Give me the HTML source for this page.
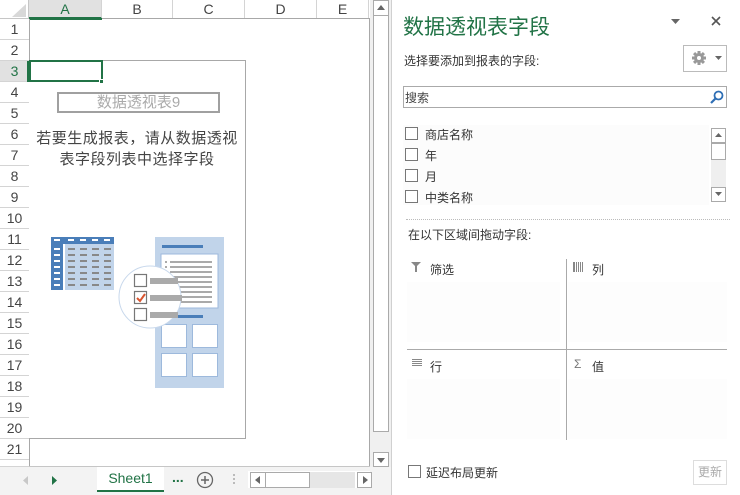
<!DOCTYPE html>
<html><head><meta charset="utf-8">
<style>
*{margin:0;padding:0;box-sizing:border-box}
body{width:740px;height:495px;overflow:hidden;background:#fff;font-family:"Liberation Sans","Noto Sans CJK SC",sans-serif;position:relative}
.a{position:absolute}
.rh{position:absolute;left:0;width:29px;height:21px;border-bottom:1px solid #d4d4d4;font-size:14px;color:#444;text-align:center;line-height:21px;background:#fff}
.ch{position:absolute;top:0;height:19px;border-right:1px solid #d4d4d4;font-size:14px;color:#444;text-align:center;line-height:19px;background:#fff}
.cb{position:absolute;width:13px;height:13px;border:1px solid #777;background:#fff}
.t{position:absolute;font-size:12px;color:#333;white-space:nowrap}
</style></head><body>
<div class="a" style="left:0;top:0;width:29px;height:19px;background:#fff;border-right:1px solid #c6c6c6;border-bottom:1px solid #c6c6c6"></div>
<svg class="a" style="left:12px;top:4px" width="14" height="13"><polygon points="14,0 14,13 0,13" fill="#d8d8d8"/></svg>
<div class="ch" style="left:29px;width:73px;background:#e1e1e1;color:#217346;border-bottom:2px solid #217346">A</div>
<div class="ch" style="left:102px;width:71px">B</div>
<div class="ch" style="left:173px;width:72px">C</div>
<div class="ch" style="left:245px;width:72px">D</div>
<div class="ch" style="left:317px;width:52px">E</div>
<div class="a" style="left:29px;top:18px;width:341px;height:1px;background:#a8a8a8"></div>
<div class="a" style="left:29px;top:18px;width:73px;height:2px;background:#217346"></div>
<div id="rows"></div>
<div class="a" style="left:29px;top:19px;width:1px;height:448px;background:#a8a8a8"></div>
<div class="a" style="left:369px;top:19px;width:1px;height:448px;background:#a8a8a8"></div>
<div class="a" style="left:29px;top:466px;width:341px;height:1px;background:#c6c6c6"></div>
<div class="a" style="left:29px;top:60px;width:217px;height:379px;border:1px solid #a8a8a8;border-left:none;background:#fff"></div>
<div class="a" style="left:29px;top:60px;width:74px;height:22px;border:2px solid #217346"></div>
<div class="a" style="left:99px;top:79px;width:5px;height:5px;background:#217346;border:1px solid #fff"></div>
<div class="a" style="left:57px;top:92px;width:163px;height:21px;border:2px solid #a0a0a0;font-size:15px;color:#aaa;text-align:center;line-height:17px">数据透视表9</div>
<div class="t" style="left:29px;top:128px;width:216px;text-align:center;font-size:15px;color:#444;line-height:21px;letter-spacing:0.5px">若要生成报表，请从数据透视<br>表字段列表中选择字段</div>
<svg class="a" style="left:40px;top:220px" width="200" height="180">
<rect x="11" y="17" width="63" height="53" fill="#c1d4ea"/>
<rect x="11" y="17" width="12" height="53" fill="#4a7eb9"/>
<rect x="11" y="17" width="63" height="7" fill="#4a7eb9"/>
<rect x="23" y="24" width="2" height="46" fill="#fff"/>
<g fill="#fff"><rect x="14" y="19" width="6" height="2"/><rect x="28" y="19" width="6" height="2"/><rect x="40" y="19" width="6" height="2"/><rect x="52" y="19" width="6" height="2"/><rect x="64" y="19" width="6" height="2"/></g>
<g id="tbl"></g>
<rect x="115" y="17" width="69" height="151" fill="#c1d4ea"/>
<rect x="122" y="25" width="41" height="3" fill="#4a7eb9"/>
<rect x="121" y="34" width="57" height="54" fill="#fff" stroke="#9db9dc"/>
<g fill="#aaa"><rect x="125" y="41" width="2" height="2"/><rect x="125" y="46" width="2" height="2"/><rect x="130" y="41" width="42" height="2"/><rect x="130" y="46" width="42" height="2"/><rect x="130" y="51" width="42" height="2"/><rect x="130" y="56" width="42" height="2"/><rect x="130" y="61" width="42" height="2"/><rect x="130" y="66" width="42" height="2"/><rect x="130" y="71" width="42" height="2"/><rect x="130" y="76" width="42" height="2"/><rect x="130" y="81" width="42" height="2"/></g>
<rect x="122" y="95" width="41" height="3" fill="#4a7eb9"/>
<g fill="#fff" stroke="#9db9dc"><rect x="121.5" y="104.5" width="25" height="23"/><rect x="152.5" y="104.5" width="25" height="23"/><rect x="121.5" y="133.5" width="25" height="23"/><rect x="152.5" y="133.5" width="25" height="23"/></g>
<circle cx="110" cy="77" r="31" fill="#fff" stroke="#c8d8ec"/>
<g fill="#fff" stroke="#777" stroke-width="1.2"><rect x="94.5" y="54.5" width="12" height="12"/><rect x="94.5" y="71.5" width="12" height="12"/><rect x="94.5" y="88.5" width="12" height="12"/></g>
<g fill="#aaa"><rect x="110" y="58" width="28" height="6"/><rect x="110" y="75" width="32" height="6"/><rect x="110" y="92" width="28" height="6"/></g>
<path d="M97 78 L100 81 L105 74" stroke="#d9552f" stroke-width="2" fill="none"/>
</svg>
<div class="a" style="left:370px;top:0;width:21px;height:467px;background:#f0f0f0"></div>
<div class="a" style="left:373px;top:0;width:16px;height:16px;border:1px solid #aaa;background:#fff"></div>
<svg class="a" style="left:377px;top:5px" width="8" height="5"><polygon points="0,5 8,5 4,0" fill="#666"/></svg>
<div class="a" style="left:373px;top:15px;width:16px;height:417px;border:1px solid #aaa;background:#fff"></div>
<div class="a" style="left:373px;top:452px;width:16px;height:15px;border:1px solid #aaa;background:#fff"></div>
<svg class="a" style="left:377px;top:458px" width="8" height="5"><polygon points="0,0 8,0 4,5" fill="#666"/></svg>
<div class="a" style="left:0;top:467px;width:392px;height:28px;background:#f3f3f3"></div>
<svg class="a" style="left:23px;top:476px" width="6" height="9"><polygon points="5,0 5,9 0,4.5" fill="#c8c8c8"/></svg>
<svg class="a" style="left:52px;top:476px" width="6" height="9"><polygon points="0,0 0,9 5,4.5" fill="#217346"/></svg>
<div class="a" style="left:97px;top:467px;width:67px;height:25px;background:#fff;border-bottom:2px solid #217346;font-size:14px;color:#217346;text-align:center;line-height:23px">Sheet1</div>
<div class="t" style="left:172px;top:469px;font-size:14px;color:#217346;font-weight:bold">...</div>
<svg class="a" style="left:196px;top:471px" width="18" height="18"><circle cx="9" cy="9" r="7.5" fill="none" stroke="#666" stroke-width="1.3"/><path d="M9 5V13M5 9H13" stroke="#666" stroke-width="1.5"/></svg>
<div class="a" style="left:233px;top:474px;width:2px;height:2px;background:#bbb;box-shadow:0 4px #bbb,0 8px #bbb"></div>
<div class="a" style="left:248px;top:471px;width:122px;height:17px;background:#fff"></div>
<div class="a" style="left:250px;top:472px;width:105px;height:16px;background:#e6e6e6"></div>
<div class="a" style="left:250px;top:472px;width:16px;height:16px;border:1px solid #aaa;background:#fff"></div>
<svg class="a" style="left:255px;top:476px" width="5" height="8"><polygon points="5,0 5,8 0,4" fill="#666"/></svg>
<div class="a" style="left:265px;top:472px;width:45px;height:16px;border:1px solid #aaa;background:#fff"></div>
<div class="a" style="left:357px;top:472px;width:15px;height:16px;border:1px solid #aaa;background:#fff"></div>
<svg class="a" style="left:363px;top:476px" width="5" height="8"><polygon points="0,0 0,8 5,4" fill="#666"/></svg>
<div class="a" style="left:391px;top:0;width:349px;height:495px;background:#fff;border-left:1px solid #d0d0d0"></div>
<div class="t" style="left:403px;top:11px;font-size:21px;color:#217346">数据透视表字段</div>
<svg class="a" style="left:671px;top:19px" width="9" height="5"><polygon points="0,0 9,0 4.5,5" fill="#666"/></svg>
<svg class="a" style="left:711px;top:16px" width="10" height="10"><path d="M1 1L9 9M9 1L1 9" stroke="#555" stroke-width="1.6"/></svg>
<div class="t" style="left:404px;top:52px;font-size:12px">选择要添加到报表的字段:</div>
<div class="a" style="left:683px;top:45px;width:44px;height:27px;border:1px solid #bbb;background:#fff"></div>
<svg class="a" style="left:692px;top:51px" width="14" height="14"><g fill="#999"><circle cx="7" cy="7" r="5"/><rect x="5.5" y="0" width="3" height="14"/><rect x="0" y="5.5" width="14" height="3"/><rect x="5.5" y="0" width="3" height="14" transform="rotate(45 7 7)"/><rect x="5.5" y="0" width="3" height="14" transform="rotate(-45 7 7)"/></g><circle cx="7" cy="7" r="2" fill="#fff"/></svg>
<svg class="a" style="left:715px;top:56px" width="7" height="4"><polygon points="0,0 7,0 3.5,4" fill="#666"/></svg>
<div class="a" style="left:403px;top:86px;width:324px;height:22px;border:1px solid #aaa;background:#fff"></div>
<div class="t" style="left:405px;top:89px;font-size:12px;color:#444">搜索</div>
<svg class="a" style="left:710px;top:90px" width="14" height="14"><circle cx="8.5" cy="5.5" r="4" fill="none" stroke="#2f6fb5" stroke-width="1.8"/><path d="M5.5 8.5L1 13" stroke="#2f6fb5" stroke-width="2.2"/></svg>
<div class="a" style="left:403px;top:125px;width:306px;height:80px;background:#fcfcfc"></div>
<div class="cb" style="left:405px;top:127px"></div><div class="t" style="left:425px;top:126px">商店名称</div>
<div class="cb" style="left:405px;top:148px"></div><div class="t" style="left:425px;top:147px">年</div>
<div class="cb" style="left:405px;top:169px"></div><div class="t" style="left:425px;top:168px">月</div>
<div class="cb" style="left:405px;top:190px"></div><div class="t" style="left:425px;top:189px">中类名称</div>
<div class="a" style="left:711px;top:128px;width:15px;height:74px;background:#efefef"></div>
<div class="a" style="left:711px;top:128px;width:15px;height:15px;border:1px solid #aaa;background:#fff"></div>
<svg class="a" style="left:715px;top:133px" width="7" height="4"><polygon points="0,4 7,4 3.5,0" fill="#666"/></svg>
<div class="a" style="left:711px;top:143px;width:15px;height:17px;border:1px solid #aaa;background:#fff"></div>
<div class="a" style="left:711px;top:187px;width:15px;height:15px;border:1px solid #aaa;background:#fff"></div>
<svg class="a" style="left:715px;top:192px" width="7" height="4"><polygon points="0,0 7,0 3.5,4" fill="#666"/></svg>
<div class="a" style="left:406px;top:219px;width:324px;border-top:1px dotted #bbb"></div>
<div class="t" style="left:408px;top:226px">在以下区域间拖动字段:</div>
<div class="a" style="left:407px;top:282px;width:153px;height:60px;background:#fdfdfd"></div>
<div class="a" style="left:568px;top:282px;width:159px;height:60px;background:#fdfdfd"></div>
<div class="a" style="left:407px;top:379px;width:153px;height:60px;background:#fdfdfd"></div>
<div class="a" style="left:568px;top:379px;width:159px;height:60px;background:#fdfdfd"></div>
<div class="a" style="left:566px;top:259px;width:1px;height:181px;background:#aaa"></div>
<div class="a" style="left:407px;top:349px;width:320px;height:1px;background:#aaa"></div>
<svg class="a" style="left:411px;top:262px" width="10" height="10"><polygon points="0,0 10,0 6,4 6,10 4,10 4,4" fill="#888"/></svg>
<div class="t" style="left:430px;top:261px">筛选</div>
<svg class="a" style="left:573px;top:262px" width="10" height="10"><g fill="#888"><rect x="0" y="0" width="2" height="10"/><rect x="3" y="0" width="1" height="10"/><rect x="5" y="0" width="1" height="10"/><rect x="7" y="0" width="1" height="10"/><rect x="9" y="0" width="1" height="10"/></g></svg>
<div class="t" style="left:592px;top:261px">列</div>
<svg class="a" style="left:412px;top:359px" width="10" height="8"><g fill="#888"><rect y="0" width="10" height="1"/><rect y="2" width="10" height="1"/><rect y="4" width="10" height="1"/><rect y="6" width="10" height="1"/></g></svg>
<div class="t" style="left:430px;top:358px">行</div>
<div class="t" style="left:574px;top:357px;font-size:12px;color:#777">Σ</div>
<div class="t" style="left:592px;top:358px">值</div>
<div class="cb" style="left:408px;top:465px"></div><div class="t" style="left:426px;top:464px">延迟布局更新</div>
<div class="a" style="left:693px;top:460px;width:34px;height:25px;border:1px solid #ddd;font-size:12px;color:#aaa;text-align:center;line-height:23px">更新</div>
<script>
var r=document.getElementById('rows'),h='';
for(var i=1;i<=22;i++){var t=19+(i-1)*21;h+='<div class="rh" style="top:'+t+'px;'+(i==3?'background:#e1e1e1;color:#217346;':'')+(i==22?'height:'+(467-t)+'px;':'')+'">'+(i<22?i:'')+'</div>';}
r.innerHTML=h+'<div class="a" style="left:0;top:61px;width:29px;height:21px;border-right:2px solid #217346"></div>';
var g=document.getElementById('tbl'),s='';
for(var y=0;y<7;y++){s+='<rect x="14" y="'+(28+y*6)+'" width="6" height="2" fill="#fff"/>';for(var x=0;x<4;x++)s+='<rect x="'+(28+x*12)+'" y="'+(28+y*6)+'" width="7" height="2" fill="#888"/>';}
g.innerHTML=s;
</script>
</body></html>
